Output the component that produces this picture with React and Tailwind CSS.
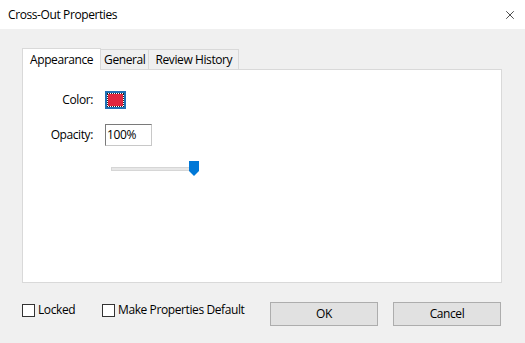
import { X } from "lucide-react";

// ── Small pieces ───────────────────────────────────────────────────────────────
function Tab({ label, active, pad }) {
  return active ? (
    <div className={`relative z-10 -mb-px flex h-[22px] items-center border border-b-0 border-[#d9d9d9] bg-white ${pad}`}>
      {label}
    </div>
  ) : (
    <div className={`mt-[1px] flex h-[20px] items-center border border-b-0 border-l-0 border-[#d9d9d9] bg-[#f0f0f0] ${pad}`}>
      {label}
    </div>
  );
}

function CheckItem({ label, className = "" }) {
  return (
    <label className={`flex items-center gap-[3px] ${className}`}>
      <span className="h-[13px] w-[13px] border border-[#333] bg-white" />
      {label}
    </label>
  );
}

function Button({ children }) {
  return (
    <button className="flex h-[24px] w-[108px] items-center justify-center border border-[#adadad] bg-[#e1e1e1] text-black">
      {children}
    </button>
  );
}

// ── Main dialog ────────────────────────────────────────────────────────────────
export default function App() {
  return (
    <div
      className="flex h-[343px] w-[525px] flex-col bg-[#f0f0f0] text-[12px] tracking-[-0.4px] text-black"
      style={{ fontFamily: '"Open Sans", "Noto Sans", sans-serif' }}
    >
      {/* title bar */}
      <div className="flex h-[29px] items-center justify-between bg-white pl-[8px] pr-[8px]">
        <span className="text-[12px]">Cross-Out Properties</span>
        <X size={14} strokeWidth={1.2} />
      </div>

      {/* tabs + panel */}
      <div className="ml-[22px] mt-[18px] w-[480px]">
        <div className="flex h-[22px] items-end">
          <Tab label="Appearance" active pad="px-[7px]" />
          <Tab label="General" pad="px-[3px]" />
          <Tab label="Review History" pad="px-[6px]" />
        </div>
        <div className="h-[214px] border border-[#d9d9d9] bg-white">
          <div className="mt-[21px] flex items-center">
            <span className="w-[70px] text-right">Color:</span>
            <div className="ml-[12px] h-[18px] w-[21px] bg-[#1f6fb5] p-[2px]">
              <div className="h-full w-full border border-dotted border-[#222] bg-white">
                <div className="h-full w-full bg-[#e0263e]" />
              </div>
            </div>
          </div>
          <div className="mt-[15px] flex items-center">
            <span className="w-[70px] text-right">Opacity:</span>
            <div className="ml-[12px] flex h-[22px] w-[47px] items-center border border-[#7a7a7a] border-r-[#c8c8c8] border-b-[#c8c8c8] bg-white px-[1px]">
              100%
            </div>
          </div>
          <div className="ml-[88px] mt-[15px] flex items-center">
            <div className="h-[4px] w-[80px] border border-[#d6d6d6] bg-[#e7e7e7]" />
            <svg width="10" height="15" viewBox="0 0 10 15" className="-ml-[2px]">
              <path d="M0 0 H10 V10 L5 15 L0 10 Z" fill="#0078d7" />
            </svg>
          </div>
        </div>
      </div>

      {/* footer */}
      <div className="ml-[22px] mt-[19px] flex items-start">
        <CheckItem label="Locked" className="-mt-[1px] w-[80px]" />
        <CheckItem label="Make Properties Default" className="-mt-[1px] w-[168px]" />
        <Button>OK</Button>
        <div className="w-[15px]" />
        <Button>Cancel</Button>
      </div>
    </div>
  );
}
